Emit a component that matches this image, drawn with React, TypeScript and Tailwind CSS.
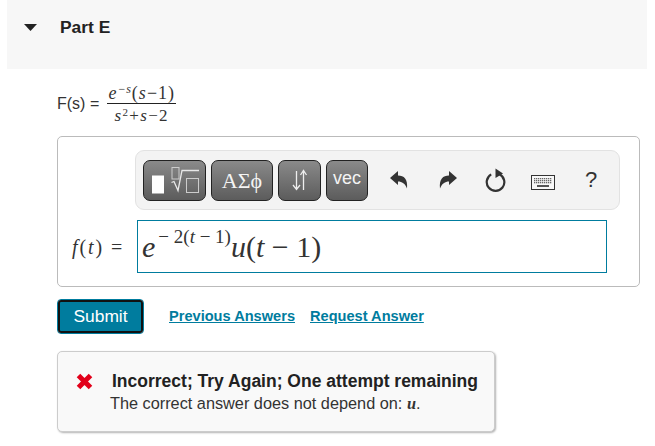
const SANS = "font-['Liberation_Sans',Arial,sans-serif]";
const SERIF = "font-['Liberation_Serif','Times_New_Roman',serif]";

const TOOL_BUTTON =
  "flex h-[41px] items-center justify-center rounded-[7px] border border-[#222] bg-gradient-to-b from-[#8a8a8a] to-[#5c5c5c] text-[#f4f4f4]";

function TemplatesIcon() {
  return (
    <svg width="52" height="36" viewBox="0 0 52 36" fill="none">
      <rect x="3" y="13.5" width="12" height="18" fill="#fff" />
      <rect x="23" y="5.5" width="7" height="11.5" stroke="#ccc" />
      <path d="M22.5 20.5l2.5-1 4 9 4-20h17" stroke="#e8e8e8" strokeWidth="1.3" />
      <rect x="37.5" y="16.5" width="12" height="14" stroke="#ccc" />
    </svg>
  );
}

function ArrowsIcon() {
  return (
    <svg width="16" height="22" viewBox="0 0 16 22" fill="none" stroke="#eee" strokeWidth="1.3">
      <path d="M4.5 2v18M1 16l3.5 4.5L8 16" />
      <path d="M11.5 21V2M8.5 6l3-4.5 3 4.5" />
    </svg>
  );
}

function UndoIcon({ flip }: { flip?: boolean }) {
  return (
    <svg className={flip ? "-scale-x-100" : ""} width="18" height="18" viewBox="0 0 18 18">
      <path d="M0 7L8 0V4.5C14 4.5 18 8 17 17.5C15 12.5 12 10.5 8 10.5V14Z" fill="#333" />
    </svg>
  );
}

function ResetIcon() {
  return (
    <svg width="22" height="24" viewBox="0 0 22 24" fill="none">
      <path d="M14.5 6.2A8.8 8.8 0 1 1 6.2 6.4" stroke="#333" strokeWidth="2.2" />
      <path d="M10.5 0.5l7.5 5-7.5 4.5z" fill="#333" />
    </svg>
  );
}

function KeyboardIcon() {
  const keys = [];
  for (let y = 3; y <= 7; y += 2) {
    for (let x = 3; x <= 19; x += 2) {
      keys.push(<rect key={`${x}-${y}`} x={x} y={y} width="1.3" height="1.3" fill="#666" />);
    }
  }
  return (
    <svg width="24" height="15" viewBox="0 0 24 15">
      <rect x="0.5" y="0.5" width="23" height="14" fill="#f8f8f8" stroke="#333" />
      {keys}
      <rect x="6" y="10" width="12" height="2" fill="#555" />
    </svg>
  );
}

function Toolbar() {
  return (
    <div className="ml-[77px] flex h-[60px] w-[485px] items-center rounded-[9px] border border-[#e2e2e2] bg-[#f3f3f3] pl-[7px]">
      <div className="flex gap-[5px]">
        <div className={`${TOOL_BUTTON} w-[63px]`}>
          <TemplatesIcon />
        </div>
        <div className={`${TOOL_BUTTON} w-[62px] ${SERIF} text-[22px]`}>ΑΣϕ</div>
        <div className={`${TOOL_BUTTON} w-[43px]`}>
          <ArrowsIcon />
        </div>
        <div className={`${TOOL_BUTTON} w-[42px] ${SANS} pb-[3px] text-[18px]`}>vec</div>
      </div>
      <div className="ml-[22px] flex items-center text-[#333]">
        <UndoIcon />
        <span className="ml-[31px]">
          <UndoIcon flip />
        </span>
        <span className="ml-[28px]">
          <ResetIcon />
        </span>
        <span className="ml-[24px] mt-[4px]">
          <KeyboardIcon />
        </span>
        <span className={`ml-[30px] ${SANS} text-[22px] leading-none`}>?</span>
      </div>
    </div>
  );
}

function Fraction() {
  return (
    <span className={`ml-[8px] inline-flex w-[69px] flex-col items-center ${SERIF} text-[#333]`}>
      <span className="flex h-[22px] items-end pb-[1px] text-[18px] leading-none tracking-[1px]">
        <i>e</i>
        <span className="mb-[7px] ml-[1px] text-[12px]">
          −<i>s</i>
        </span>
        <span>
          (<i>s</i>−1)
        </span>
      </span>
      <span className="h-px w-full bg-[#222]" />
      <span className="flex h-[24px] items-center text-[17px] leading-none tracking-[1.3px]">
        <i>s</i>
        <span className="mb-[6px] text-[11px]">2</span>+<i>s</i>−2
      </span>
    </span>
  );
}

export default function App() {
  return (
    <div className={`h-[446px] w-[655px] overflow-hidden bg-white ${SANS} text-[#333]`}>
      <div className="ml-[7px] flex h-[69px] w-[640px] bg-[#f7f7f7] pl-[17px] pt-[17px]">
        <svg className="mt-[7px]" width="13" height="7" viewBox="0 0 13 7">
          <path d="M0 0h13L6.5 7z" fill="#222" />
        </svg>
        <h2 className="ml-[23px] text-[17.4px] leading-[20px] font-bold text-[#222]">Part E</h2>
      </div>

      <div className="ml-[57px] mt-[11px] flex h-[48px] items-center text-[16px]">
        F(s) =<Fraction />
      </div>

      <div className="ml-[57px] mt-[8px] h-[151px] w-[583px] rounded-[5px] border border-[#bbb] pt-[13px]">
        <Toolbar />
        <div className="mt-[10px] flex items-center">
          <span className={`ml-[14px] w-[65px] ${SERIF} text-[20px] tracking-[1.9px] text-[#333]`}>
            <i>f</i>(<i>t</i>) =
          </span>
          <div
            className={`flex h-[53px] w-[470px] items-end border border-[#007c9e] pl-[4px] pb-[10px] ${SERIF} text-[30px] leading-none text-[#333]`}
          >
            <i>e</i>
            <span className="mb-[16px] ml-[3px] text-[19px] leading-none">
              − 2(<i>t</i> − 1)
            </span>
            <span>
              <i>u</i>(<i>t</i> − 1)
            </span>
          </div>
        </div>
      </div>

      <div className="ml-[57px] mt-[12px] flex h-[35px] items-center">
        <div className="rounded-[4px] border border-[#007c9e] bg-white p-0">
          <button className="block h-[33px] w-[85px] rounded-[3px] border-2 border-[#111] bg-[#007c9e] text-[17.4px] text-white">
            Submit
          </button>
        </div>
        <a className="ml-[25px] text-[14.6px] font-bold text-[#007c9e] underline">Previous Answers</a>
        <a className="ml-[15px] text-[14.6px] font-bold text-[#007c9e] underline">Request Answer</a>
      </div>

      <div className="ml-[57px] mt-[17px] flex h-[81px] w-[438px] rounded-[5px] border border-[#ccc] bg-[#f9f9f9] pl-[18px] pt-[18px] shadow-[1px_1px_2px_rgba(0,0,0,0.3)]">
        <svg className="mt-[3px]" width="17" height="17" viewBox="0 0 17 17">
          <path d="M2.5 2.5L14.5 14.5M14.5 2.5L2.5 14.5" stroke="#e2001a" strokeWidth="5" />
        </svg>
        <div className="ml-[19px]">
          <div className="text-[17.5px] leading-[22px] font-bold text-[#222]">Incorrect; Try Again; One attempt remaining</div>
          <div className="-ml-[2px] text-[16.3px] leading-[22px] text-[#333]">
            The correct answer does not depend on: <i className={`${SERIF} font-bold`}>u</i>.
          </div>
        </div>
      </div>
    </div>
  );
}
